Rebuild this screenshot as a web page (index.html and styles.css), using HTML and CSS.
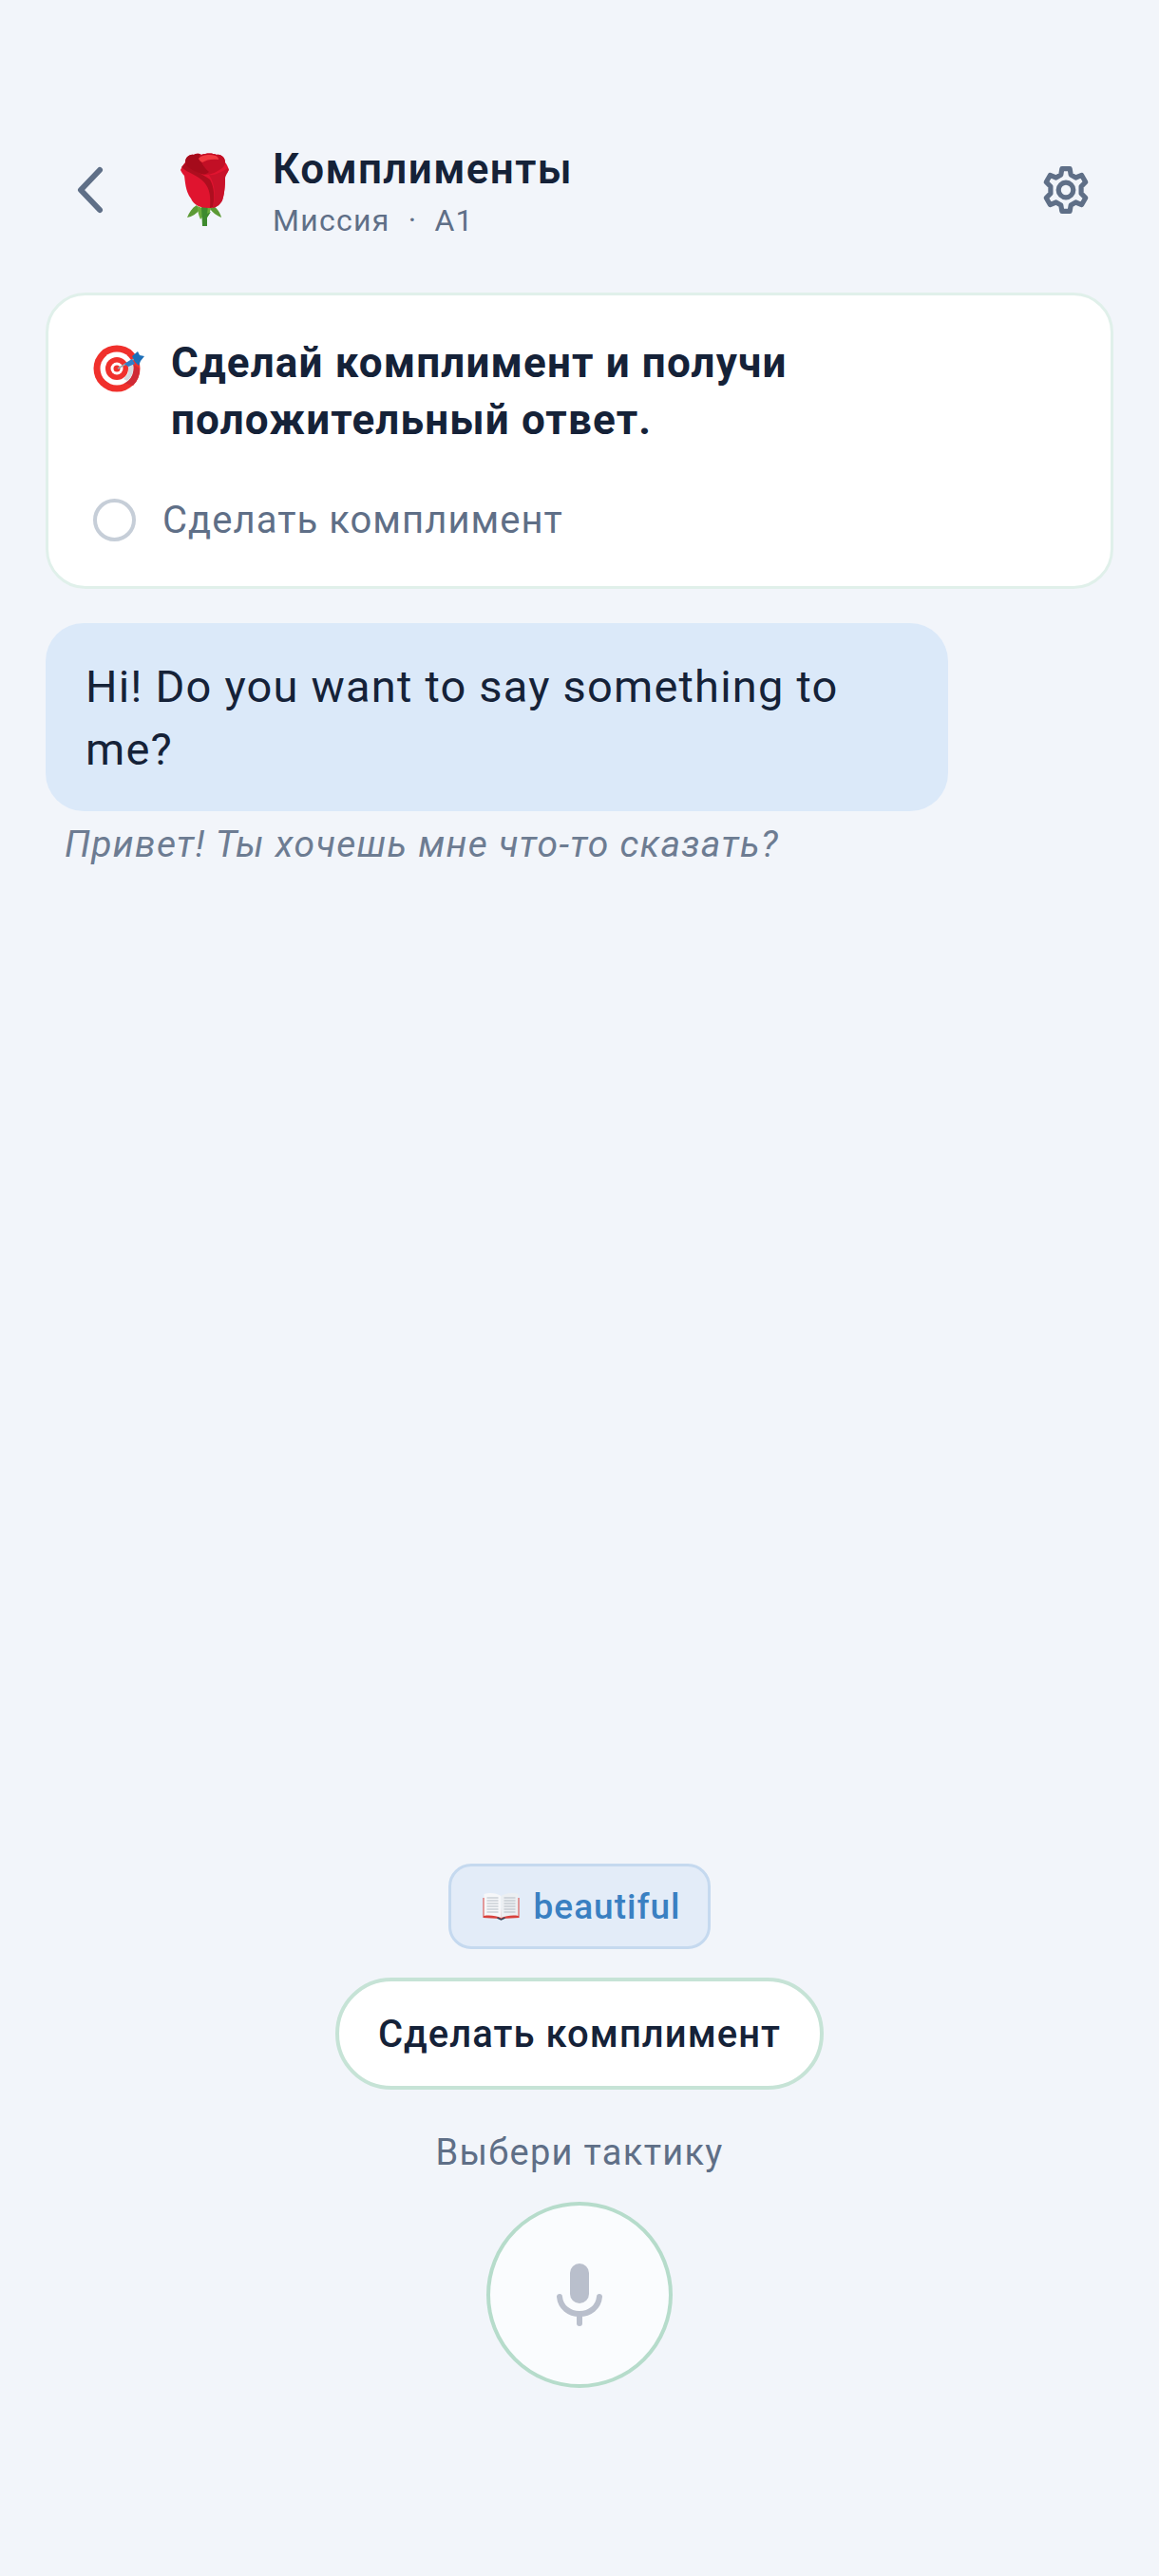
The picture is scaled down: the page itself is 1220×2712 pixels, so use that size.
FILE: index.html
```html
<!DOCTYPE html>
<html lang="ru">
<head>
<meta charset="utf-8">
<title>Комплименты</title>
<link rel="stylesheet" href="styles.css">
</head>
<body>
<div class="page">
  <header class="header">
    <svg class="back" viewBox="0 0 34 52" fill="none"><path d="M27 5 7 26l20 21" stroke="#5f6f87" stroke-width="6" stroke-linecap="round" stroke-linejoin="round"/></svg>
    <svg class="rose" viewBox="0 0 54 78">
      <path d="M19 55c-5 3-8 8-10 13 5-1 10-4 13-8zM35 55c5 2 9 8 10 13-5-2-9-5-12-9z" fill="#5c9a35"/>
      <path d="M20 56c0 5 1 10 3 14 2-2 4-6 4-11zM34 56c0 5-2 9-4 12-2-2-3-5-3-8z" fill="#6bab3c"/>
      <path d="M24 56h7l-1 8 4-2-4 6v9h-5z" fill="#3e8a2e"/>
      <path d="M2 18C4 14 5 12 7 10 7 5 11 1 16 2c3-2 6-1 8 0 5-2 12-2 16 0 5-1 9 3 9 8 2 2 3 5 4 8-3 3-4 5-4 8 0 9-1 18-3 24-3 5-8 8-14 8-9 0-16-3-19-10C7 40 7 30 6 24 4 22 3 20 2 18z" fill="#e0142f"/>
      <path d="M32 23c7 1 15-4 20-7 2 3-2 6-3 10 0 9-1 18-3 24-2 4-5 7-10 8 3-11 3-25-4-35z" fill="#c9122a"/>
      <path d="M3 15c3-3 4-4 5-6 5 9 17 13 25 19 5 9 5 20 3 29l-3 1c1-12 0-20-6-27C20 23 9 21 3 15z" fill="#ae0e1f"/>
      <path d="M16 2c3-2 6-1 8 0 5-2 12-2 16 0 5-1 9 3 9 8 0 2-1 3-2 5-6 5-13 8-19 8C20 21 13 10 16 2z" fill="#c20f25"/>
      <path d="M7 10C7 5 11 1 16 2c2-1 4-1 6-1 0 6 3 13 10 19-3 3-7 3-11 1C14 18 9 15 7 10z" fill="#a50b1b"/>
      <path d="M21 6c3-4 12-5 18-3 2 1 3 2 3 4-6-1-13 0-17 3-2-1-3-2-4-4z" fill="#f0383f"/>
    </svg>
    <div class="titles">
      <div class="title">Комплименты</div>
      <div class="sub"><span>Миссия</span><span class="dot">·</span><span>A1</span></div>
    </div>
    <svg class="gear" viewBox="-26 -26 52 52" fill="none" stroke="#5f6f87" stroke-width="5" stroke-linejoin="round">
      <circle r="7.500"/>
      <path d="M-4-21.500 4-21.500 5-15.500 10-12.500 16-15 20-8 15.500-3.500 15.500 3.500 20 8 16 15 10 12.500 5 15.500 4 21.500-4 21.500-5 15.500-10 12.500-16 15-20 8-15.500 3.500-15.500-3.500-20-8-16-15-10-12.500-5-15.500Z"/>
    </svg>
  </header>

  <section class="card">
    <div class="goal">
      <svg class="target" viewBox="0 0 54 50">
        <circle cx="25" cy="25" r="24.500" fill="#f0302c"/>
        <path d="M42 43A24.500 24.500 0 0 0 49 25l-6-4-14 18z" fill="#cf2a35"/>
        <circle cx="25" cy="25" r="17.500" fill="#fff"/>
        <path d="M36 38a17.500 17.500 0 0 0 5-20l-5 3 1 9-5 6z" fill="#d5dade"/>
        <circle cx="25" cy="25" r="12" fill="#f0302c"/>
        <circle cx="25" cy="25" r="6.500" fill="#fff"/>
        <circle cx="25" cy="25" r="3.500" fill="#f0302c"/>
        <path d="M26 25 43 15" stroke="#9aa5ad" stroke-width="1.500"/>
        <path d="M33 20l8-5 3 5-7 3z" fill="#2f7fc9"/>
        <path d="M41 12l6-5 2 4 5 1-4 5-2 5-4-4z" fill="#1d6fb8"/>
      </svg>
      <div class="goal-text">Сделай комплимент и получи положительный ответ.</div>
    </div>
    <div class="task">
      <span class="radio"></span>
      <span class="task-text">Сделать комплимент</span>
    </div>
  </section>

  <div class="bubble">Hi! Do you want to say something to me?</div>
  <div class="translation">Привет! Ты хочешь мне что-то сказать?</div>

  <div class="spacer"></div>

  <footer class="footer">
    <div class="chip">
      <svg class="book" viewBox="0 0 40 30">
        <path d="M1 6h18l1 22-1 0-18-1z" fill="#d8413c"/>
        <path d="M39 6H21l-1 22 1 0 18-1z" fill="#d8413c"/>
        <path d="M2 2c6-2 13-1 18 2v23c-5-2-12-3-18-2z" fill="#f6f7f9"/>
        <path d="M38 2c-6-2-13-1-18 2v23c5-2 12-3 18-2z" fill="#eceff2"/>
        <path d="M5 6h12M5 9h12M5 12h12M5 15h12M5 18h12M5 21h12M23 6h12M23 9h12M23 12h12M23 15h12M23 18h12M23 21h12" stroke="#b4bcc4" stroke-width="1"/>
        <path d="M16 27l4 2 4-2" stroke="#36475a" stroke-width="1.500" fill="none"/>
      </svg>
      <span>beautiful</span>
    </div>
    <button class="action">Сделать комплимент</button>
    <div class="hint">Выбери тактику</div>
    <div class="mic">
      <svg class="mic-icon" viewBox="0 0 48 66" fill="none">
        <rect x="14" y="0" width="20" height="42" rx="10" fill="#b9bfcc"/>
        <path d="M3 35c1 11 10 18 21 18s20-7 21-18" stroke="#b9bfcc" stroke-width="6" stroke-linecap="round"/>
        <path d="M24 53v10" stroke="#b9bfcc" stroke-width="6" stroke-linecap="round"/>
      </svg>
    </div>
  </footer>
</div>
</body>
</html>
```

FILE: styles.css
```css
* { box-sizing: border-box; }
html, body { margin: 0; padding: 0; }
body { background: #f2f5fa; font-family: Roboto, "Noto Sans", sans-serif; }
.page { height: 2712px; display: flex; flex-direction: column; padding: 150px 48px 198px; overflow: hidden; }

.header { display: flex; align-items: center; height: 100px; padding-left: 30px; padding-right: 23px; }
.back { width: 34px; height: 52px; flex: none; }
.rose { width: 54px; height: 78px; flex: none; margin-left: 76px; margin-right: 45px; }
.titles { flex: 1; }
.title { font-size: 44px; font-weight: 600; line-height: 54px; color: #152238; letter-spacing: 1.350px; white-space: nowrap; }
.sub { display: flex; font-size: 32px; line-height: 36px; margin-top: 9px; color: #5f6f87; letter-spacing: 1.300px; }
.dot { margin: 0 18px 0 19px; }
.gear { width: 54px; height: 54px; flex: none; }

.card { margin-top: 58px; height: 312px; background: #fff; border: 3px solid #e0f0ea; border-radius: 42px; padding: 41px 45px 0 47px; }
.goal { display: flex; align-items: flex-start; gap: 28px; }
.target { width: 54px; height: 50px; flex: none; margin-top: 11px; }
.goal-text { font-size: 44px; font-weight: 700; line-height: 60px; color: #152238; width: 900px; letter-spacing: 1.150px; }
.task { display: flex; align-items: center; gap: 28px; margin-top: 53px; }
.radio { width: 45px; height: 45px; border: 4px solid #c6ced8; border-radius: 50%; flex: none; }
.task-text { font-size: 40px; line-height: 44px; color: #5f6f87; letter-spacing: 1.050px; }

.bubble { margin-top: 36px; width: 950px; height: 198px; background: #dbe9f9; border-radius: 40px; padding: 34px 42px; font-size: 47px; line-height: 66px; color: #152238; letter-spacing: 1.200px; }
.translation { margin-top: 15px; padding-left: 20px; font-size: 39px; line-height: 40px; font-style: italic; color: #6d7c92; letter-spacing: 1.300px; }

.spacer { flex: 1; }

.footer { display: flex; flex-direction: column; align-items: center; }
.chip { display: flex; align-items: center; gap: 13px; height: 90px; padding: 0 29px 0 31px; background: #e3ecf8; border: 3px solid #c5d9ef; border-radius: 24px; color: #3a80c2; font-size: 37px; font-weight: 500; letter-spacing: 1px; }
.book { width: 43px; height: 30px; flex: none; }
.action { margin-top: 30px; height: 118px; width: 514px; background: #fff; border: 4px solid #c6e3d6; border-radius: 59px; font-family: inherit; font-size: 40px; font-weight: 500; color: #152238; letter-spacing: 1.050px; }
.hint { margin-top: 46px; font-size: 38px; line-height: 40px; color: #5f6f87; letter-spacing: 1.300px; }
.mic { margin-top: 32px; width: 196px; height: 196px; border: 4px solid #b6dccb; border-radius: 50%; background: #fafcfe; display: flex; align-items: center; justify-content: center; }
.mic-icon { width: 48px; height: 66px; }
```
